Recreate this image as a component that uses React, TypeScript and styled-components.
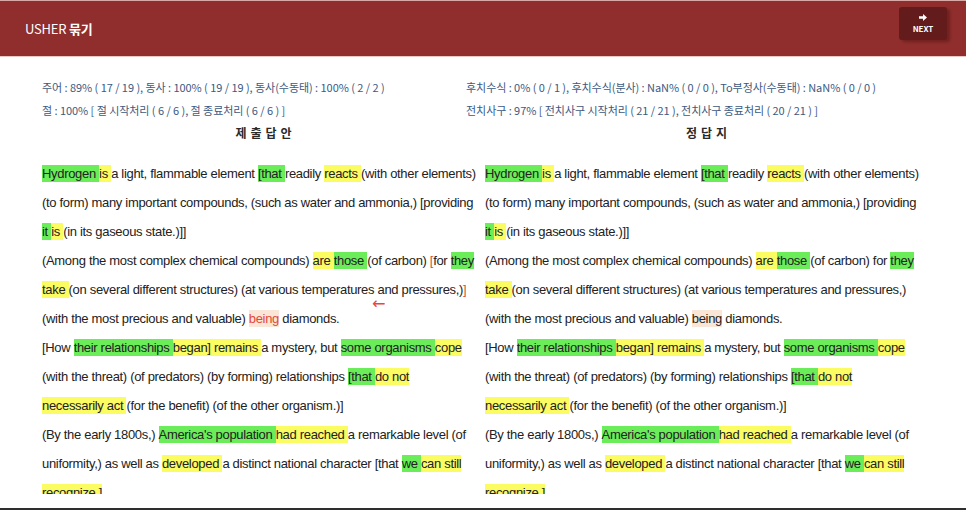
import React from "react";
import styled, { createGlobalStyle } from "styled-components";

const Global = createGlobalStyle`
  html, body { margin: 0; padding: 0; background: #fff; }
  body { font-family: "Noto Sans CJK KR", "Noto Sans", sans-serif; color: #222; }
  * { box-sizing: border-box; }
`;

const Page = styled.div`
  width: 966px;
  height: 510px;
  display: flex;
  flex-direction: column;
  overflow: hidden;
`;

const Header = styled.header`
  height: 57px;
  flex: none;
  background: #8f2e2d;
  border-top: 1px solid #d9a9a8;
  border-bottom: 1px solid #e9c9c8;
  display: flex;
  align-items: center;
  justify-content: space-between;
  padding: 0 19px 0 25px;
`;

const Title = styled.div`
  color: #fff;
  font-size: 13px;
  letter-spacing: -0.2px;
  b { font-weight: 700; }
`;

const NextButton = styled.button`
  width: 48px;
  height: 33px;
  margin-top: -11px;
  border: none;
  border-radius: 3px;
  background: #631b1b;
  box-shadow: 3px 2px 3px rgba(60, 10, 10, 0.35);
  display: flex;
  flex-direction: column;
  align-items: center;
  justify-content: center;
  gap: 3px;
  padding: 0;
  color: #fff;
  font-family: "Noto Sans CJK KR", sans-serif;
  font-weight: 700;
  font-size: 8px;
  line-height: 9px;
`;

const Body = styled.main`
  flex: 1;
  display: flex;
  flex-direction: column;
  padding: 19px 38px 0 42px;
`;

const StatsGrid = styled.div`
  display: grid;
  grid-template-columns: 424px 1fr;
  font-size: 11px;
  line-height: 23px;
  color: #3c5a82;
  letter-spacing: -0.05px;
`;

const StatLine = styled.div`
  white-space: nowrap;
`;

const Columns = styled.div`
  display: grid;
  grid-template-columns: 443px 443px;
`;

const Heading = styled.div`
  text-align: center;
  font-size: 12px;
  font-weight: 700;
  line-height: 20px;
  letter-spacing: 4px;
  color: #2a2a2a;
  padding-top: 1px;
  padding-left: 4px;
`;

const TextArea = styled.div`
  margin-top: 16px;
  height: 335px;
  overflow: hidden;
`;

const Column = styled.div`
  position: relative;
`;

const Line = styled.div`
  height: 29px;
  line-height: 29px;
  font-size: 13px;
  white-space: pre;
  color: #222;
  font-family: "Liberation Sans", Arial, sans-serif;
  letter-spacing: -0.32px;
`;

const Mark = styled.span<{ $tone: "g" | "y" | "b" }>`
  display: inline-block;
  white-space: pre;
  line-height: 17px;
  height: 17px;
  vertical-align: baseline;
  background: ${(p) => (p.$tone === "g" ? "#6aed58" : p.$tone === "y" ? "#fbfb62" : "#f9e6d6")};
`;

const RedText = styled.span`
  color: #e2493a;
`;

const Arrow = styled.span`
  position: absolute;
  left: 330px;
  top: 135px;
  font-size: 16px;
  line-height: 20px;
  color: #e2493a;
  font-family: "DejaVu Sans", sans-serif;
`;

const Footer = styled.div`
  height: 3px;
  flex: none;
  background: #2e2e2e;
  margin-top: 14px;
`;

type Seg = [string, ("g" | "y" | "b" | "r" | "br" | "")?];

const makeLines = (left: boolean): Seg[][] => [
  [["Hydrogen ", "g"], ["is ", "y"], ["a light, flammable element "], ["[that ", "g"], ["readily "], ["reacts ", "y"], ["(with other elements)"]],
  [["(to form) many important compounds, (such as water and ammonia,) [providing"]],
  [["it ", "g"], ["is ", "y"], ["(in its gaseous state.)]]"]],
  left
    ? [["(Among the most complex chemical compounds) "], ["are ", "y"], ["those ", "g"], ["(of carbon) "], ["[", "r"], ["for "], ["they", "g"]]
    : [["(Among the most complex chemical compounds) "], ["are ", "y"], ["those ", "g"], ["(of carbon) for "], ["they", "g"]],
  left
    ? [["take ", "y"], ["(on several different structures) (at various temperatures and pressures,)"], ["]", "r"]]
    : [["take ", "y"], ["(on several different structures) (at various temperatures and pressures,)"]],
  [["(with the most precious and valuable) "], ["being", left ? "br" : "b"], [" diamonds."]],
  [["[How "], ["their relationships ", "g"], ["began] remains ", "y"], ["a mystery, but "], ["some organisms ", "g"], ["cope", "y"]],
  [["(with the threat) (of predators) (by forming) relationships "], ["[that ", "g"], ["do not", "y"]],
  [["necessarily act ", "y"], ["(for the benefit) (of the other organism.)]"]],
  [["(By the early 1800s,) "], ["America's population ", "g"], ["had reached ", "y"], ["a remarkable level (of"]],
  [["uniformity,) as well as "], ["developed ", "y"], ["a distinct national character [that "], ["we ", "g"], ["can still", "y"]],
  [["recognize.]", "y"]],
];

const renderSeg = ([text, kind]: Seg, i: number) => {
  if (kind === "g" || kind === "y" || kind === "b") return <Mark key={i} $tone={kind}>{text}</Mark>;
  if (kind === "br") return <Mark key={i} $tone="b"><RedText>{text}</RedText></Mark>;
  if (kind === "r") return <RedText key={i}>{text}</RedText>;
  return <React.Fragment key={i}>{text}</React.Fragment>;
};

const Passage = ({ left }: { left: boolean }) => (
  <Column>
    {makeLines(left).map((segs, i) => (
      <Line key={i}>{segs.map(renderSeg)}</Line>
    ))}
    {left && <Arrow>←</Arrow>}
  </Column>
);

const ArrowIcon = () => (
  <svg width="8" height="7" viewBox="0 0 8 7">
    <path d="M0 2.2h4V0l4 3.5-4 3.5V4.8H0z" fill="#fff" />
  </svg>
);

export default function App() {
  return (
    <Page>
      <Global />
      <Header>
        <Title>
          USHER <b>묶기</b>
        </Title>
        <NextButton>
          <ArrowIcon />
          NEXT
        </NextButton>
      </Header>
      <Body>
        <StatsGrid>
          <StatLine>주어 : 89% ( 17 / 19 ), 동사 : 100% ( 19 / 19 ), 동사(수동태) : 100% ( 2 / 2 )</StatLine>
          <StatLine>후치수식 : 0% ( 0 / 1 ), 후치수식(분사) : NaN% ( 0 / 0 ), To부정사(수동태) : NaN% ( 0 / 0 )</StatLine>
          <StatLine>절 : 100% [ 절 시작처리 ( 6 / 6 ), 절 종료처리 ( 6 / 6 ) ]</StatLine>
          <StatLine>전치사구 : 97% [ 전치사구 시작처리 ( 21 / 21 ), 전치사구 종료처리 ( 20 / 21 ) ]</StatLine>
        </StatsGrid>
        <Columns>
          <Heading>제출답안</Heading>
          <Heading>정답지</Heading>
        </Columns>
        <TextArea>
          <Columns>
            <Passage left />
            <Passage left={false} />
          </Columns>
        </TextArea>
      </Body>
      <Footer />
    </Page>
  );
}
